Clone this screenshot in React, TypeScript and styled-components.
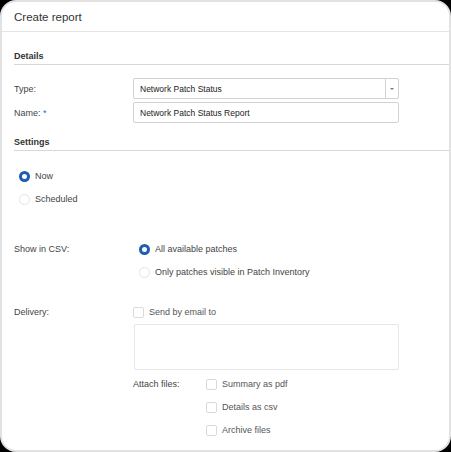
import styled, { createGlobalStyle } from "styled-components";

const GlobalStyle = createGlobalStyle`
  html, body {
    margin: 0;
    padding: 0;
    background: #000;
  }
  body {
    font-family: "Liberation Sans", Arial, sans-serif;
    color: #333;
  }
`;

const Card = styled.div`
  box-sizing: border-box;
  width: 451px;
  height: 452px;
  background: #fff;
  border: 2px solid #e2e2e2;
  border-radius: 16px;
  overflow: hidden;
`;

const Header = styled.div`
  height: 29px;
  display: flex;
  align-items: center;
  padding-left: 12px;
  border-bottom: 1px solid #e4e4e4;
  font-size: 11.5px;
  color: #333;
`;

const SectionTitle = styled.div<{ $top: number }>`
  margin: ${(p) => p.$top}px 0 0 12px;
  height: 14px;
  line-height: 14px;
  padding-bottom: 1px;
  border-bottom: 1px solid #d8d8d8;
  font-size: 9px;
  font-weight: bold;
  color: #333;
`;

const Fields = styled.div`
  display: flex;
  flex-direction: column;
  gap: 3px;
  margin-top: 13px;
  padding-left: 12px;
`;

const FieldRow = styled.div`
  display: grid;
  grid-template-columns: 119px 266px;
  align-items: center;
`;

const Label = styled.div`
  font-size: 9px;
  color: #444;
`;

const Required = styled.span`
  color: #2f6fc0;
`;

const Input = styled.div`
  box-sizing: border-box;
  height: 21px;
  display: flex;
  align-items: center;
  border: 1px solid #d2d2d2;
  border-radius: 2px;
  font-size: 8.5px;
  color: #222;
  padding-left: 6px;
`;

const Select = styled(Input)`
  padding-right: 0;
`;

const SelectText = styled.div`
  flex: 1;
`;

const SelectArrow = styled.div`
  width: 12px;
  height: 100%;
  border-left: 1px solid #d2d2d2;
  display: flex;
  align-items: center;
  justify-content: center;
  &::after {
    content: "";
    border-left: 2px solid transparent;
    border-right: 2px solid transparent;
    border-top: 2px solid #777;
  }
`;

const OptionList = styled.div<{ $top: number; $left: number }>`
  display: flex;
  flex-direction: column;
  gap: 3px;
  margin-top: ${(p) => p.$top}px;
  padding-left: ${(p) => p.$left}px;
`;

const Option = styled.div`
  height: 20px;
  display: flex;
  align-items: center;
  gap: 5px;
  font-size: 9px;
  color: #444;
`;

const Radio = styled.span<{ $checked?: boolean }>`
  box-sizing: border-box;
  width: 11px;
  height: 11px;
  border-radius: 50%;
  background: #fff;
  border: ${(p) => (p.$checked ? "3px solid #1d5fae" : "1px solid #e3e3e3")};
  flex-shrink: 0;
`;

const Check = styled.span`
  box-sizing: border-box;
  width: 11px;
  height: 11px;
  border: 1px solid #dadada;
  border-radius: 2px;
  background: #fff;
  flex-shrink: 0;
`;

const CsvBlock = styled.div`
  display: grid;
  grid-template-columns: 125px 1fr;
  margin-top: 30px;
  padding-left: 12px;
`;

const SideLabel = styled(Label)`
  height: 20px;
  display: flex;
  align-items: center;
`;

const DeliveryBlock = styled.div`
  display: grid;
  grid-template-columns: 119px 266px;
  margin-top: 20px;
  padding-left: 12px;
`;

const DeliveryBody = styled.div`
  display: flex;
  flex-direction: column;
`;

const EmailBox = styled.div`
  box-sizing: border-box;
  height: 46px;
  margin: 2px 0 0 1px;
  border: 1px solid #e6e6e6;
  border-radius: 2px;
`;

const AttachRow = styled.div`
  display: grid;
  grid-template-columns: 73px 1fr;
  margin-top: 4px;
`;

const MutedOption = styled(Option)`
  color: #555;
`;

export default function App() {
  return (
    <>
      <GlobalStyle />
      <Card>
        <Header>Create report</Header>

        <SectionTitle $top={17}>Details</SectionTitle>
        <Fields>
          <FieldRow>
            <Label>Type:</Label>
            <Select>
              <SelectText>Network Patch Status</SelectText>
              <SelectArrow />
            </Select>
          </FieldRow>
          <FieldRow>
            <Label>
              Name: <Required>*</Required>
            </Label>
            <Input>Network Patch Status Report</Input>
          </FieldRow>
        </Fields>

        <SectionTitle $top={12}>Settings</SectionTitle>
        <OptionList $top={15} $left={17}>
          <Option>
            <Radio $checked />
            Now
          </Option>
          <Option>
            <Radio />
            Scheduled
          </Option>
        </OptionList>

        <CsvBlock>
          <SideLabel>Show in CSV:</SideLabel>
          <OptionList $top={0} $left={0}>
            <Option>
              <Radio $checked />
              All available patches
            </Option>
            <Option>
              <Radio />
              Only patches visible in Patch Inventory
            </Option>
          </OptionList>
        </CsvBlock>

        <DeliveryBlock>
          <SideLabel>Delivery:</SideLabel>
          <DeliveryBody>
            <MutedOption>
              <Check />
              Send by email to
            </MutedOption>
            <EmailBox />
            <AttachRow>
              <SideLabel>Attach files:</SideLabel>
              <OptionList $top={0} $left={0}>
                <MutedOption>
                  <Check />
                  Summary as pdf
                </MutedOption>
                <MutedOption>
                  <Check />
                  Details as csv
                </MutedOption>
                <MutedOption>
                  <Check />
                  Archive files
                </MutedOption>
              </OptionList>
            </AttachRow>
          </DeliveryBody>
        </DeliveryBlock>
      </Card>
    </>
  );
}
